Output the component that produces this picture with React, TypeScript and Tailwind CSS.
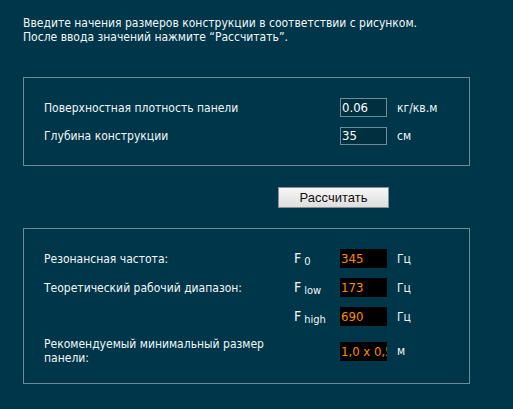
import React from 'react';

const font = { fontFamily: '"DejaVu Sans Condensed", "DejaVu Sans", Tahoma, sans-serif' };

const Sub: React.FC<{ s: string }> = ({ s }) => (
  <span className="text-[14px] leading-none">
    F<sub className="text-[11px] ml-[3px] relative top-[2px]">{s}</sub>
  </span>
);

const Value: React.FC<{ v: string }> = ({ v }) => (
  <div className="w-[47px] h-[19px] bg-black text-[#ff8a00] text-[13px] leading-[19px] pl-[1px] overflow-hidden whitespace-nowrap">
    {v}
  </div>
);

export default function App() {
  return (
    <div className="w-[513px] h-[409px] bg-[#003649] text-[#f2f7f9] text-[12px] overflow-hidden" style={font}>
      <div className="pl-[23px] pt-[16px] leading-[14px]">
        <p>Введите начения размеров конструкции в соответствии с рисунком.</p>
        <p>После ввода значений нажмите “Рассчитать”.</p>
      </div>

      {/* входные параметры */}
      <div className="ml-[23px] mt-[33px] w-[447px] border border-[#6e8b98] pl-[20px] pt-[20px] pb-[20px] flex flex-col gap-[10px]">
        <div className="flex items-center h-[19px]">
          <span className="w-[296px]">Поверхностная плотность панели</span>
          <input
            defaultValue="0.06"
            className="w-[47px] h-[19px] bg-[#00303f] border border-[#6e8b98] text-[13px] text-white px-[1px] outline-none"
            style={font}
          />
          <span className="ml-[10px]">кг/кв.м</span>
        </div>
        <div className="flex items-center h-[18px]">
          <span className="w-[296px]">Глубина конструкции</span>
          <input
            defaultValue="35"
            className="w-[47px] h-[18px] bg-[#00303f] border border-[#6e8b98] text-[13px] text-white px-[1px] outline-none"
            style={font}
          />
          <span className="ml-[10px]">см</span>
        </div>
      </div>

      <button
        className="ml-[278px] mt-[21px] w-[111px] h-[21px] border border-[#8a8f93] bg-gradient-to-b from-[#f7f7f7] to-[#dedede] text-[#111] text-[13px] leading-none"
        style={{ fontFamily: '"Liberation Sans", Arial, sans-serif' }}
      >
        Рассчитать
      </button>

      {/* результаты */}
      <div className="ml-[23px] mt-[20px] w-[447px] border border-[#6e8b98] pl-[20px] pt-[20px] pb-[18px] flex flex-col gap-[10px]">
        <div className="flex items-center h-[19px]">
          <span className="w-[250px]">Резонансная частота:</span>
          <span className="w-[46px]"><Sub s="0" /></span>
          <Value v="345" />
          <span className="ml-[10px]">Гц</span>
        </div>
        <div className="flex items-center h-[19px]">
          <span className="w-[250px]">Теоретический рабочий диапазон:</span>
          <span className="w-[46px]"><Sub s="low" /></span>
          <Value v="173" />
          <span className="ml-[10px]">Гц</span>
        </div>
        <div className="flex items-center h-[19px]">
          <span className="w-[250px]"></span>
          <span className="w-[46px]"><Sub s="high" /></span>
          <Value v="690" />
          <span className="ml-[10px]">Гц</span>
        </div>
        <div className="flex items-center mt-[1px]">
          <span className="w-[296px] leading-[14px]">
            Рекомендуемый минимальный размер
            <br />
            панели:
          </span>
          <Value v="1,0 x 0,5" />
          <span className="ml-[10px]">м</span>
        </div>
      </div>
    </div>
  );
}
